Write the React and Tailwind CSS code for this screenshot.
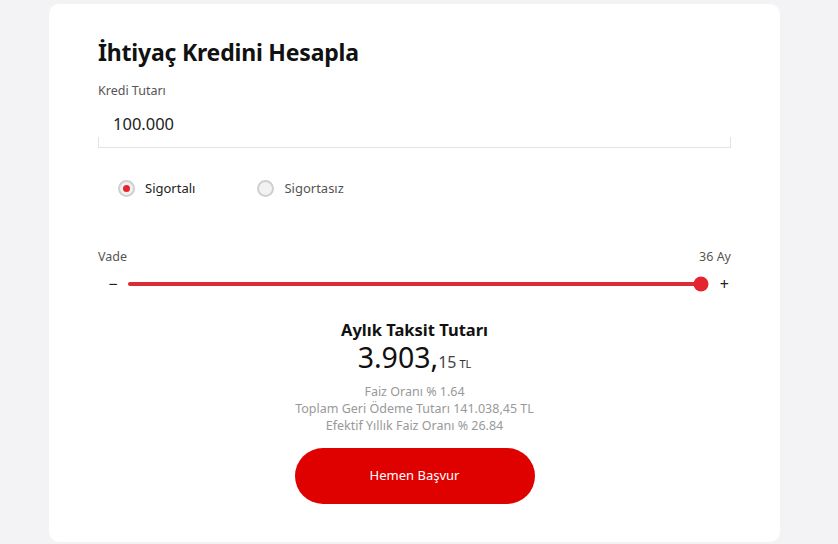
import { useState } from "react";

export default function App() {
  const [insured, setInsured] = useState(true);
  const [term, setTerm] = useState(36);
  const pct = ((term - 3) / (36 - 3)) * 100;

  return (
    <div className="min-h-[544px] bg-[#f3f3f5] pt-[4px] font-['Noto_Sans',sans-serif]">
      <div className="ml-[49px] w-[731px] h-[538px] bg-white rounded-[10px] px-[49px] pt-[32px]">
        <h1 className="text-[23px] font-bold leading-[32px] text-[#111] tracking-[-0.2px]">İhtiyaç Kredini Hesapla</h1>

        {/* Kredi tutarı */}
        <p className="mt-[14px] text-[12.5px] leading-[18px] text-[#555]">Kredi Tutarı</p>
        <div className="mt-[10px] h-[38px] border-b border-[#e3e3e3] relative">
          <span className="absolute left-0 bottom-0 h-[10px] border-l border-[#e3e3e3]" />
          <span className="absolute right-0 bottom-0 h-[10px] border-r border-[#e3e3e3]" />
          <div className="pl-[15px] text-[16.5px] leading-[28px] text-[#222]">100.000</div>
        </div>

        {/* Sigorta */}
        <div className="mt-[31px] flex items-center pl-[20px] gap-[62px]">
          <button type="button" onClick={() => setInsured(true)} className="flex items-center gap-[10px]">
            <span className="w-[17px] h-[17px] rounded-full border-2 border-[#cfcfcf] bg-[#f2f2f2] flex items-center justify-center">
              {insured && <span className="w-[7px] h-[7px] rounded-full bg-[#e4252f]" />}
            </span>
            <span className="text-[13px] text-[#222]">Sigortalı</span>
          </button>
          <button type="button" onClick={() => setInsured(false)} className="flex items-center gap-[10px]">
            <span className="w-[17px] h-[17px] rounded-full border-2 border-[#cfcfcf] bg-[#f2f2f2] flex items-center justify-center">
              {!insured && <span className="w-[7px] h-[7px] rounded-full bg-[#e4252f]" />}
            </span>
            <span className="text-[13px] text-[#555]">Sigortasız</span>
          </button>
        </div>

        {/* Vade */}
        <div className="mt-[49px] flex justify-between text-[12.5px] leading-[18px] text-[#555]">
          <span>Vade</span>
          <span>{term} Ay</span>
        </div>
        <div className="mt-[8px] flex items-center h-[20px]">
          <button type="button" onClick={() => setTerm((t) => Math.max(3, t - 1))} className="w-[30px] text-[16px] leading-none text-[#222] text-center">−</button>
          <div className="relative flex-1 h-[4px] bg-[#e5e5e5] rounded-full">
            <div className="absolute left-0 top-0 h-[4px] bg-[#dc2a36] rounded-full" style={{ width: `${pct}%` }} />
            <span className="absolute top-1/2 -translate-y-1/2 -translate-x-1/2 w-[15px] h-[15px] rounded-full bg-[#e4252f]" style={{ left: `${pct}%` }} />
          </div>
          <button type="button" onClick={() => setTerm((t) => Math.min(36, t + 1))} className="w-[30px] text-[16px] leading-none text-[#222] text-right pr-[2px]">+</button>
        </div>

        {/* Sonuç */}
        <div className="mt-[25px] flex flex-col items-center">
          <p className="text-[16.5px] font-bold leading-[22px] text-[#111]">Aylık Taksit Tutarı</p>
          <p className="leading-[32px] text-[#111]">
            <span className="text-[28.5px]">3.903,</span>
            <span className="text-[16px] text-[#444]">15</span>
            <span className="text-[11px] ml-[3px] text-[#333]">TL</span>
          </p>
          <div className="mt-[3px] text-[12.5px] leading-[17px] text-[#999] text-center">
            <p>Faiz Oranı % 1.64</p>
            <p>Toplam Geri Ödeme Tutarı 141.038,45 TL</p>
            <p>Efektif Yıllık Faiz Oranı % 26.84</p>
          </div>
          <button type="button" className="mt-[14px] w-[240px] h-[56px] rounded-full bg-[#df0000] text-white text-[13px]">
            Hemen Başvur
          </button>
        </div>
      </div>
    </div>
  );
}
